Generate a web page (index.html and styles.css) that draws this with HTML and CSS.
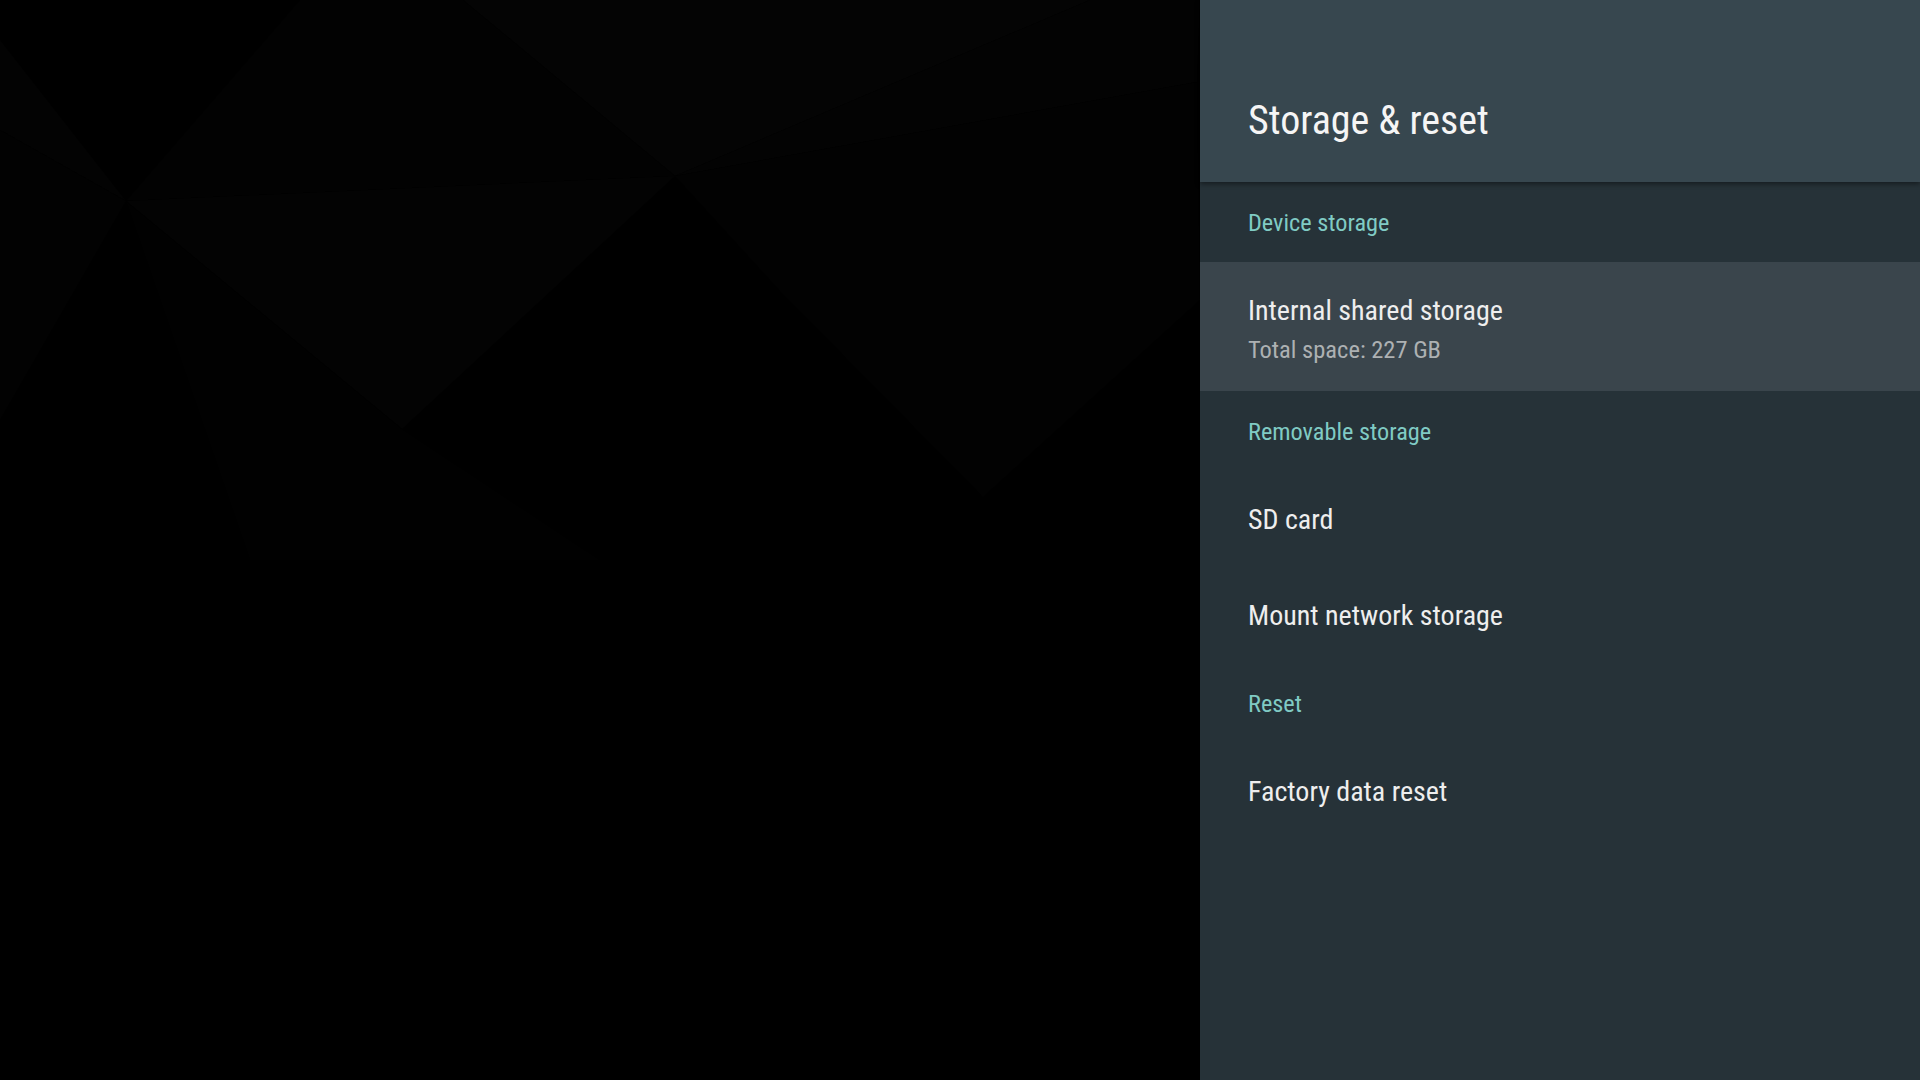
FILE: index.html
```
<!DOCTYPE html>
<html lang="en">
<head>
<meta charset="utf-8">
<title>Storage &amp; reset</title>
<link rel="stylesheet" href="styles.css">
</head>
<body>
<div class="screen">
  <div class="backdrop">
    <svg class="shards" viewBox="0 0 1200 1080" preserveAspectRatio="none" aria-hidden="true">
      <polygon points="463,0 675,176 1090,0" fill="#040404"/>
      <polygon points="675,176 1197,82 1200,0 1090,0" fill="#030303"/>
      <polygon points="0,130 126,201 0,40" fill="#030303"/>
      <polygon points="126,201 675,176 463,0 300,0" fill="#020202"/>
      <polygon points="126,201 402,429 675,176" fill="#030303"/>
      <polygon points="675,176 780,291 983,497 1200,300 1197,82" fill="#020202"/>
      <polygon points="0,130 126,201 0,420" fill="#020202"/>
      <polygon points="126,201 402,429 600,560 250,560" fill="#010101"/>
    </svg>
  </div>
  <section class="panel">
    <header class="panel-header">
      <h1 class="panel-title">Storage &amp; reset</h1>
    </header>
    <div class="pref-list">
      <div class="category">Device storage</div>
      <div class="pref pref-focused">
        <div class="pref-title">Internal shared storage</div>
        <div class="pref-summary">Total space: 227 GB</div>
      </div>
      <div class="category">Removable storage</div>
      <div class="pref pref-single">SD card</div>
      <div class="pref pref-single">Mount network storage</div>
      <div class="category">Reset</div>
      <div class="pref pref-single">Factory data reset</div>
    </div>
  </section>
</div>
</body>
</html>
```
FILE: styles.css
```
html, body {
  margin: 0;
  padding: 0;
  background: #000;
}

body {
  font-family: "Roboto Condensed", Roboto, "Liberation Sans", sans-serif;
  font-stretch: 75%;
}

.screen {
  display: flex;
  width: 1920px;
  height: 1080px;
  overflow: hidden;
}

.backdrop {
  flex: 0 0 1200px;
  height: 1080px;
  background: #000;
}

.shards {
  display: block;
  width: 1200px;
  height: 1080px;
}

.panel {
  flex: 0 0 720px;
  height: 1080px;
  background: #263238;
  display: flex;
  flex-direction: column;
}

.panel-header {
  position: relative;
  z-index: 1;
  height: 182px;
  box-sizing: border-box;
  padding: 97px 48px 0;
  background: #37474f;
  box-shadow: 0 2px 5px rgba(0, 0, 0, 0.45);
}

.panel-title {
  margin: 0;
  font-size: 40px;
  line-height: 48px;
  font-weight: 400;
  color: #f5f5f5;
}

.pref-list {
  display: flex;
  flex-direction: column;
}

.category {
  height: 80px;
  box-sizing: border-box;
  padding: 1px 48px 0;
  font-size: 24.3px;
  line-height: 79px;
  color: #80cbc4;
}

.pref {
  padding: 0 48px;
  color: #eeeeee;
}

.pref-single {
  height: 96px;
  box-sizing: border-box;
  padding-top: 1px;
  font-size: 28px;
  line-height: 95px;
}

.pref-focused {
  height: 129px;
  box-sizing: border-box;
  padding-top: 29px;
  background: #3a454c;
}

.pref-title {
  font-size: 28px;
  line-height: 40px;
  color: #eeeeee;
}

.pref-summary {
  margin-top: 3px;
  font-size: 24.5px;
  line-height: 32px;
  color: #adb1b3;
}
```
